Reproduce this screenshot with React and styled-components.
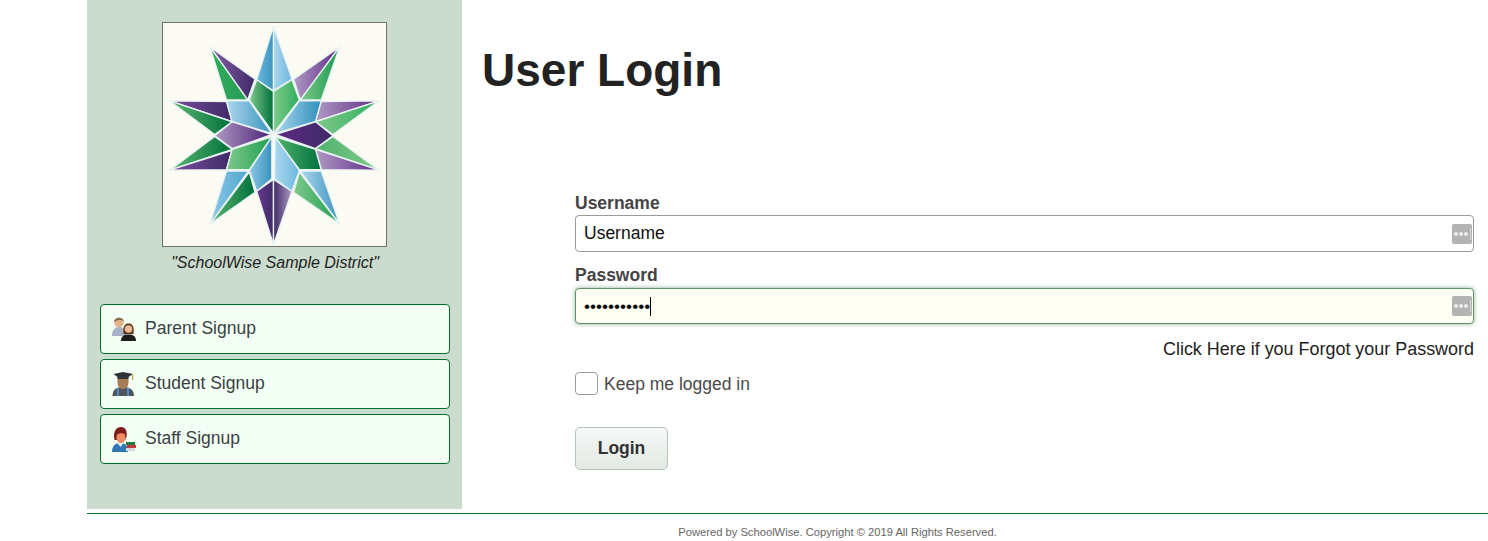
import React from "react";
import styled, { createGlobalStyle } from "styled-components";

const FONT = `"Liberation Sans", Arial, sans-serif`;

const GlobalStyle = createGlobalStyle`
  html, body {
    margin: 0;
    padding: 0;
    background: #fff;
    font-family: ${FONT};
  }
`;

const Page = styled.div`
  width: 1488px;
  padding-left: 87px;
  box-sizing: border-box;
`;

const Columns = styled.div`
  display: flex;
  height: 509px;
`;

const Sidebar = styled.aside`
  width: 375px;
  flex: none;
  background: #cbdccf;
  padding: 22px 12px 0 13px;
  box-sizing: border-box;
  display: flex;
  flex-direction: column;
  align-items: center;
`;

const LogoBox = styled.div`
  width: 225px;
  height: 225px;
  margin-right: 2px;
  box-sizing: border-box;
  border: 1px solid #6f7366;
  background: #fbfbf3;
  line-height: 0;
`;

const Motto = styled.div`
  margin-top: 7px;
  font-size: 16px;
  line-height: 18px;
  font-style: italic;
  color: #222;
`;

const SignupList = styled.div`
  margin-top: 32px;
  width: 100%;
  display: flex;
  flex-direction: column;
  gap: 5px;
`;

const SignupLink = styled.a`
  display: flex;
  align-items: center;
  height: 50px;
  box-sizing: border-box;
  padding: 0 0 2px 10px;
  gap: 8px;
  border: 1px solid #00702a;
  border-radius: 4px;
  background: #f3fff5;
  color: #3a3f44;
  font-size: 17.5px;

  svg {
    margin-top: 2px;
  }
`;

const Main = styled.main`
  flex: 1;
  min-width: 0;
  padding: 0 14px 0 20px;
  display: flex;
  flex-direction: column;
`;

const Title = styled.h1`
  margin: 43px 0 0 0;
  font-size: 46px;
  line-height: 54px;
  font-weight: bold;
  color: #222;
`;

const Form = styled.form`
  margin: 96px 0 0 93px;
  display: flex;
  flex-direction: column;
`;

const Label = styled.label`
  font-size: 17.5px;
  line-height: 20px;
  font-weight: bold;
  color: #444;
  margin-bottom: 3px;
`;

const InputWrap = styled.div`
  position: relative;
  height: ${(p) => (p.$focused ? "36px" : "37px")};
  margin-top: ${(p) => (p.$focused ? "0" : "-1px")};
  margin-bottom: ${(p) => (p.$focused ? "0" : "13px")};
  box-sizing: border-box;
  border: 1px solid ${(p) => (p.$focused ? "#5e9468" : "#9a9a9a")};
  border-radius: 4px;
  background: ${(p) => (p.$focused ? "#fffff3" : "#fff")};
  box-shadow: ${(p) => (p.$focused ? "0 0 4px rgba(60, 120, 70, 0.6)" : "none")};
  display: flex;
  align-items: center;
  padding-left: 8px;
  color: #111;
  font-size: 17.5px;
`;

const Dots = styled.span`
  font-size: 17.2px;
  color: #111;
`;

const Caret = styled.span`
  display: inline-block;
  width: 1px;
  height: 19px;
  background: #000;
`;

const KeyBadge = styled.span`
  position: absolute;
  right: 1px;
  top: 50%;
  transform: translateY(-50%);
  width: 20px;
  height: 20px;
  border-radius: 2px;
  background: #b3b3b3;
  display: flex;
  align-items: center;
  padding-left: 2px;
  box-sizing: border-box;
  gap: 1px;

  &::after {
    content: "";
    width: 1px;
    height: 12px;
    margin-left: 1px;
    background: #d8d8d8;
  }
`;

const KeyDot = styled.i`
  width: 4px;
  height: 4px;
  border-radius: 50%;
  background: #ececec;
`;

const Forgot = styled.a`
  align-self: flex-end;
  margin-top: 15px;
  font-size: 17.95px;
  line-height: 20px;
  color: #222;
`;

const KeepRow = styled.div`
  margin-top: 13px;
  display: flex;
  align-items: center;
  gap: 6px;
  font-size: 17.5px;
  color: #4a4a4a;
`;

const KeepText = styled.span`
  margin-top: 2px;
`;

const CheckBox = styled.span`
  width: 23px;
  height: 23px;
  box-sizing: border-box;
  border: 1px solid #9a9a9a;
  border-radius: 4px;
  background: #fff;
`;

const LoginButton = styled.button`
  margin-top: 32px;
  align-self: flex-start;
  width: 93px;
  height: 43px;
  border: 1px solid #b4c6b6;
  border-radius: 5px;
  background: linear-gradient(#f7f8f7, #e2e9e3);
  font-family: ${FONT};
  font-size: 17.5px;
  font-weight: bold;
  color: #333;
`;

const Footer = styled.footer`
  margin-top: 4px;
  border-top: 1px solid #00702a;
  padding: 12px 0 0 100px;
  text-align: center;
  font-size: 11.2px;
  line-height: 13px;
  color: #666;
`;

const C = {
  bl: "#abd7ee", bm: "#6db7de", bd: "#3b93bd",
  pl: "#b09ac4", pm: "#5f2a87", pd: "#3d2a66",
  gl: "#7fc98a", gm: "#2fae5d", gd: "#00703c",
};

// star pieces: points, left colour, right colour
const PIECES = [
  ["355,36 355,228 305,195", C.bm, C.bd],
  ["355,36 410,193 355,228", C.bl, C.bm],
  ["305,195 355,230 355,355 283,255", C.gl, C.gd],
  ["410,195 355,230 355,355 432,255", C.gl, C.gm],
  ["166,97 300,193 278,255", "#8a5ea8", C.pd],
  ["166,97 278,255 215,255", C.gm, "#2a9a55"],
  ["552,97 415,193 435,255", C.pl, C.pm],
  ["552,97 435,255 497,255", C.gl, "#17994c"],
  ["46,258 215,260 232,320", "#7e4fa0", C.pd],
  ["46,258 232,320 180,358", "#5cb871", C.gd],
  ["669,258 497,260 480,320", C.pl, C.pm],
  ["669,258 480,320 532,358", C.gl, C.gm],
  ["215,258 283,258 350,355 232,320", C.bl, C.bd],
  ["497,258 432,258 360,355 480,320", C.bl, "#2e8fbb"],
  ["180,362 232,320 350,358 232,400", C.pl, "#4b2176"],
  ["532,362 480,320 360,358 480,400", C.pm, C.pd],
  ["46,464 180,364 232,402", "#5cb871", C.gd],
  ["46,464 232,405 215,463", "#7e4fa0", C.pd],
  ["669,464 532,364 480,400", "#4fb36c", C.gl],
  ["669,464 480,402 497,463", C.pl, C.pm],
  ["215,463 232,402 350,365 283,463", C.gl, "#1f9e50"],
  ["497,463 480,402 360,365 432,463", "#4fb36c", C.gd],
  ["283,465 350,365 350,490 305,527", "#8cc8e6", C.bd],
  ["432,465 360,365 358,490 410,527", C.bl, C.bm],
  ["355,686 305,527 355,492", "#6a3a92", C.pd],
  ["355,686 410,527 355,492", C.pd, C.pl],
  ["166,625 215,467 280,467", "#8cc8e6", "#4fa6cf"],
  ["166,625 283,470 300,530", "#5cb871", C.gd],
  ["552,625 497,467 435,467", C.bl, C.bd],
  ["552,625 432,470 415,530", C.gl, "#1f9e50"],
];

function StarLogo() {
  return (
    <svg width="223" height="223" viewBox="26 26 664 664">
      <defs>
        {PIECES.map((piece, i) => (
          <linearGradient key={i} id={`star${i}`} x1="0" y1="0" x2="1" y2="0">
            <stop offset="0" stopColor={piece[1]} />
            <stop offset="1" stopColor={piece[2]} />
          </linearGradient>
        ))}
      </defs>
      {PIECES.map((piece, i) => (
        <polygon key={i} points={piece[0]} fill={`url(#star${i})`} stroke="#e9f3f2" strokeWidth="4" strokeLinejoin="round" />
      ))}
    </svg>
  );
}

function ParentIcon() {
  return (
    <svg width="26" height="26" viewBox="0 0 26 26">
      <path d="M1 20 C1 14 4 11 8 11 C12 11 15 13 15 20Z" fill="#aab2c8" />
      <circle cx="8" cy="6.500" r="4.800" fill="#e3b48c" />
      <path d="M3 6.500 C3 1 12 0 13 5.500 C10 3.500 6 3.500 3 6.500Z" fill="#8a6a45" />
      <path d="M12.500 18 C11.500 10 14 7.500 17.500 7.500 C21 7.500 23.500 10 22.500 18Z" fill="#5b3418" />
      <circle cx="17.500" cy="13" r="3.800" fill="#eebb94" />
      <path d="M10 25 C10 20 13 18.500 17.500 18.500 C22 18.500 25 20 25 25Z" fill="#1d1d1d" />
    </svg>
  );
}

function StudentIcon() {
  return (
    <svg width="26" height="26" viewBox="0 0 26 26">
      <path d="M1.500 25 C1.500 18 6 16 12 16 C18 16 23 18 23 25Z" fill="#50555c" />
      <path d="M6 17 V25 H8 V16.500Z M16 16.500 V25 H18 V17Z" fill="#4d8fc4" />
      <path d="M6.500 7 H17.500 V11 C17.500 15.500 15 18 12 18 C9 18 6.500 15.500 6.500 11Z" fill="#a67c55" />
      <path d="M2.500 3 L12 1 L22 3 L17.500 6 V8 H6.500 V6Z" fill="#2e3136" />
      <rect x="21" y="3" width="1.200" height="6" fill="#c9a64a" />
    </svg>
  );
}

function StaffIcon() {
  return (
    <svg width="26" height="26" viewBox="0 0 26 26">
      <path d="M1 26 C1 19 5 17 9.500 17 C14 17 17 19 17 26Z" fill="#2f78b5" />
      <path d="M6.500 17 L9.500 21 L12.500 17Z" fill="#e9eef2" />
      <path d="M3.500 14 C1.500 5 5.500 1 10 1 C14.500 1 16.500 5 15.500 11 L14 14Z" fill="#7a1f1c" />
      <ellipse cx="10" cy="11.500" rx="4.500" ry="5.500" fill="#f08a62" />
      <path d="M5 9 C6 4 13 3.500 15 8 C11.500 7 8 7 5 9Z" fill="#7a1f1c" />
      <rect x="15" y="16" width="9" height="3" fill="#1f7a3d" />
      <rect x="16" y="19" width="9" height="3" fill="#c23b3b" />
      <rect x="15" y="22" width="9" height="3" fill="#d8d8d8" />
    </svg>
  );
}

function PasswordKey() {
  return (
    <KeyBadge>
      <KeyDot />
      <KeyDot />
      <KeyDot />
    </KeyBadge>
  );
}

const SIGNUPS = [
  { label: "Parent Signup", Icon: ParentIcon },
  { label: "Student Signup", Icon: StudentIcon },
  { label: "Staff Signup", Icon: StaffIcon },
];

export default function App() {
  return (
    <Page>
      <GlobalStyle />
      <Columns>
        <Sidebar>
          <LogoBox>
            <StarLogo />
          </LogoBox>
          <Motto>"SchoolWise Sample District"</Motto>
          <SignupList>
            {SIGNUPS.map(({ label, Icon }) => (
              <SignupLink key={label}>
                <Icon />
                {label}
              </SignupLink>
            ))}
          </SignupList>
        </Sidebar>
        <Main>
          <Title>User Login</Title>
          <Form>
            <Label>Username</Label>
            <InputWrap>
              Username
              <PasswordKey />
            </InputWrap>
            <Label>Password</Label>
            <InputWrap $focused>
              <Dots>•••••••••••</Dots>
              <Caret />
              <PasswordKey />
            </InputWrap>
            <Forgot>Click Here if you Forgot your Password</Forgot>
            <KeepRow>
              <CheckBox />
              <KeepText>Keep me logged in</KeepText>
            </KeepRow>
            <LoginButton type="button">Login</LoginButton>
          </Form>
        </Main>
      </Columns>
      <Footer>Powered by SchoolWise. Copyright © 2019 All Rights Reserved.</Footer>
    </Page>
  );
}
